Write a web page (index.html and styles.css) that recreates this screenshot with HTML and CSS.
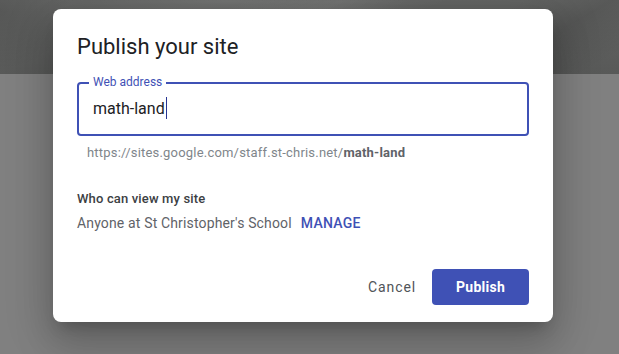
FILE: index.html
```html
<html>
  <head>
    <link rel="stylesheet" href="styles.css">
  </head>

  <body>

    <div class="backdrop">
      <div class="backdrop-header"></div>
    </div>

    <div class="dialog">
      <h1 class="dialog-title">Publish your site</h1>

      <fieldset class="address-field">
        <legend class="address-label">Web address</legend>
        <div class="address-value">math-land<span class="caret"></span></div>
      </fieldset>
      <div class="address-url">https://sites.google.com/staff.st-chris.net/<b>math-land</b></div>

      <div class="viewers">
        <div class="viewers-title">Who can view my site</div>
        <div class="viewers-row">
          <span>Anyone at St Christopher's School</span>
          <a class="manage">MANAGE</a>
        </div>
      </div>

      <div class="dialog-actions">
        <button class="btn btn-text">Cancel</button>
        <button class="btn btn-primary">Publish</button>
      </div>
    </div>

  </body>
</html>
```

FILE: styles.css
```css
body {
  margin: 0;
  background-color: rgb(128, 128, 128);
  font-family: Roboto, "Liberation Sans", sans-serif;
}
.backdrop {
  height: 354px;
}
/* blurred cover image behind the scrim */
.backdrop-header {
  height: 74px;
  background:
    radial-gradient(ellipse 180px 26px at 230px 0, rgba(255, 255, 255, 0.1), transparent),
    radial-gradient(ellipse 70px 60px at 0 10px, rgba(0, 0, 0, 0.12), transparent),
    linear-gradient(160deg, transparent 30%, rgba(255, 255, 255, 0.06) 42%, transparent 55%),
    linear-gradient(150deg, transparent 70%, rgba(0, 0, 0, 0.12) 82%, transparent 95%),
    linear-gradient(to bottom, rgb(100, 101, 100), rgb(88, 89, 88));
}

/* dialog sits over the dimmed page */
.dialog {
  position: absolute;
  top: 9px; left: 53px;
  width: 500px;
  box-sizing: border-box;
  padding: 24px 24px 17px;
  background-color: white;
  border-radius: 8px;
  box-shadow: 0 11px 15px -7px rgba(0, 0, 0, 0.2), 0 24px 38px 3px rgba(0, 0, 0, 0.14), 0 9px 46px 8px rgba(0, 0, 0, 0.12);
}
.dialog-title {
  margin: 0 0 14px;
  font-size: 22px; line-height: 28px; font-weight: 400;
  color: rgb(32, 33, 36);
}

.address-field {
  margin: 0;
  padding: 6px 14px 13px;
  border: 2px solid rgb(63, 81, 181);
  border-radius: 4px;
}
.address-label {
  margin-left: -4px;
  padding: 0 4px 2px;
  font-size: 12px; line-height: 14px;
  color: rgb(63, 81, 181);
}
.address-value {
  font-size: 16px; line-height: 24px;
  color: rgb(32, 33, 36);
}
.caret {
  display: inline-block;
  width: 1px; height: 22px;
  margin-left: 1px;
  vertical-align: -5px;
  background-color: rgb(40, 53, 147);
}
.address-url {
  margin-top: 8px;
  padding-left: 10px;
  font-size: 13px; line-height: 17px;
  letter-spacing: 0.2px;
  color: rgb(128, 134, 139);
}
.address-url b {
  color: rgb(95, 99, 104);
}

.viewers {
  margin-top: 28px;
}
.viewers-title {
  font-size: 13px; line-height: 20px; font-weight: 500;
  letter-spacing: 0.15px;
  color: rgb(60, 64, 67);
}
.viewers-row {
  display: flex;
  align-items: baseline;
  gap: 9px;
  margin-top: 4px;
  font-size: 14px; line-height: 20px;
  letter-spacing: 0.15px;
  color: rgb(95, 99, 104);
}
.manage {
  font-weight: 500;
  letter-spacing: 0.25px;
  color: rgb(63, 81, 181);
}

.dialog-actions {
  display: flex;
  justify-content: flex-end;
  gap: 8px;
  margin-top: 36px;
}
.btn {
  height: 36px;
  border: none;
  border-radius: 4px;
  font-family: Roboto, "Liberation Sans", sans-serif;
  font-size: 14px;
  letter-spacing: 0.25px;
}
.btn-text {
  padding: 0 8px;
  background: none;
  font-weight: 400;
  letter-spacing: 0.9px;
  color: rgb(80, 84, 88);
}
.btn-primary {
  padding: 0 24px;
  font-weight: 700;
  color: white;
  background-color: rgb(63, 81, 181);
}
```
